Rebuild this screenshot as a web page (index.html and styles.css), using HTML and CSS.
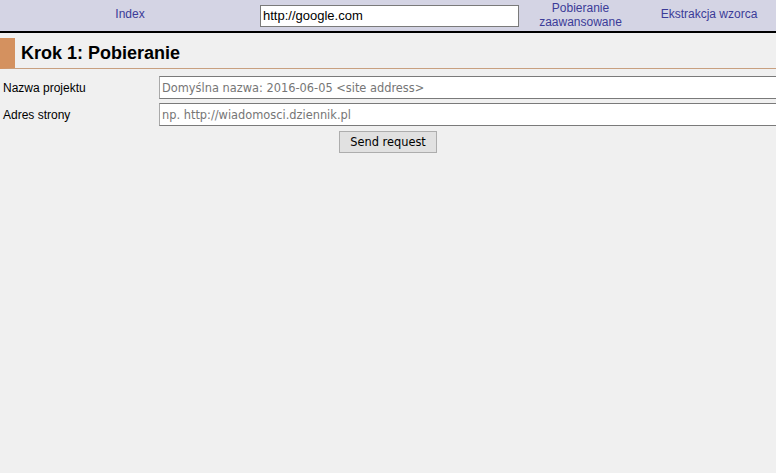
FILE: index.html
```html
<!DOCTYPE html>
<html lang="pl">
<head>
<meta charset="utf-8">
<title>Krok 1: Pobieranie</title>
<link rel="stylesheet" href="styles.css">
</head>
<body>
<div class="topbar">
  <div class="cell cell-index"><a href="#">Index</a></div>
  <div class="cell cell-url"><input class="url" type="text" value="http://google.com"></div>
  <div class="cell cell-adv"><a href="#">Pobieranie<br>zaawansowane</a></div>
  <div class="cell cell-ext"><a href="#">Ekstrakcja wzorca</a></div>
</div>
<div class="heading"><h1>Krok 1: Pobieranie</h1></div>
<form class="form">
  <div class="row">
    <label class="label">Nazwa projektu</label>
    <input class="field" type="text" placeholder="Domyślna nazwa: 2016-06-05 <site address>">
  </div>
  <div class="row">
    <label class="label">Adres strony</label>
    <input class="field" type="text" placeholder="np. http://wiadomosci.dziennik.pl">
  </div>
  <div class="actions"><button class="btn" type="button">Send request</button></div>
</form>
</body>
</html>
```
FILE: styles.css
```css
html, body { margin: 0; padding: 0; overflow: hidden; }
body {
  background: #f0f0f0;
  font-family: "Liberation Sans", Arial, sans-serif;
  font-size: 12px;
  color: #000;
  width: 776px;
  height: 473px;
}
.topbar {
  display: grid;
  grid-template-columns: 260px 261px 119px 1fr;
  height: 31px;
  background: #d4d4e4;
  border-bottom: 2px solid #000;
  align-items: center;
}
.cell { text-align: center; }
.cell a { color: #3b3b98; text-decoration: none; font-size: 12px; line-height: 14px; }
.cell-index { position: relative; top: -2px; }
.cell-ext { position: relative; top: -2px; padding-left: 2px; }
.cell-adv { position: relative; top: -1px; }
.cell-url { text-align: left; }
.url {
  display: block;
  box-sizing: border-box;
  width: 259px;
  height: 22px;
  margin: 0;
  padding: 0 2px;
  border: 1px solid #7a7a7a;
  background: #fff;
  font-family: "Liberation Sans", Arial, sans-serif;
  font-size: 13px;
  color: #000;
  outline: none;
}
.heading {
  margin-top: 5px;
  border-left: 15px solid #d4915f;
  border-bottom: 1px solid #c8a080;
  height: 30px;
  display: flex;
  align-items: center;
}
.heading h1 {
  margin: 0 0 0 6px;
  font-size: 18px;
  font-weight: bold;
  font-family: "Liberation Sans", Arial, sans-serif;
}
.form { margin-top: 7px; }
.row {
  display: flex;
  align-items: center;
  height: 23px;
  margin-bottom: 4px;
}
.label {
  width: 159px;
  padding-left: 3px;
  box-sizing: border-box;
  flex: none;
}
.field {
  flex: none;
  box-sizing: border-box;
  width: 700px;
  height: 23px;
  margin: 0;
  padding: 0 2px;
  border: 1px solid #a9a9a9;
  border-top-color: #7a7a7a;
  border-bottom-color: #7a7a7a;
  background: #fff;
  font-family: "DejaVu Sans", Tahoma, sans-serif;
  font-size: 11.4px;
  outline: none;
}
.field::placeholder { color: #767676; }
.actions { display: flex; justify-content: center; margin-top: 5px; }
.btn {
  box-sizing: border-box;
  width: 98px;
  height: 22px;
  margin: 0;
  padding: 0;
  background: #e1e1e1;
  border: 1px solid #adadad;
  border-radius: 0;
  font-family: "DejaVu Sans", Tahoma, sans-serif;
  font-size: 11.4px;
  color: #000;
}
```
